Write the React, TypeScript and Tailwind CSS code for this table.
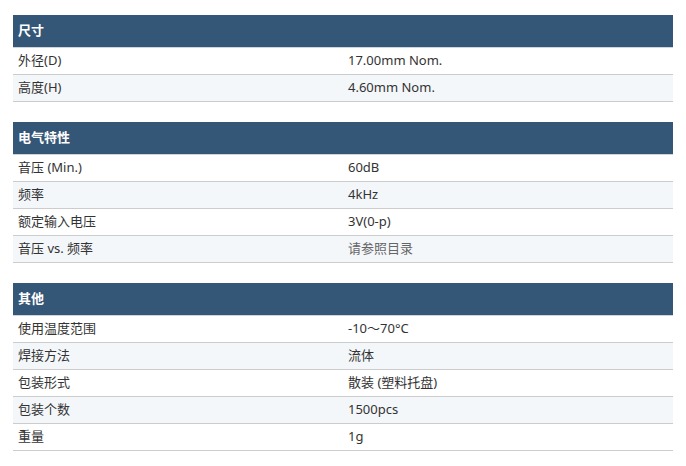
const sections = [
  {
    title: "尺寸",
    rows: [
      ["外径(D)", "17.00mm Nom."],
      ["高度(H)", "4.60mm Nom."],
    ],
  },
  {
    title: "电气特性",
    rows: [
      ["音压 (Min.)", "60dB"],
      ["频率", "4kHz"],
      ["额定输入电压", "3V(0-p)"],
      ["音压 vs. 频率", "请参照目录", "link"],
    ],
  },
  {
    title: "其他",
    rows: [
      ["使用温度范围", "-10～70°C"],
      ["焊接方法", "流体"],
      ["包装形式", "散装 (塑料托盘)"],
      ["包装个数", "1500pcs"],
      ["重量", "1g"],
    ],
  },
];

export default function App() {
  return (
    <div
      className="min-h-[466px] bg-white px-[13px] pt-[15px] text-[13px] text-[#333]"
      style={{ fontFamily: '"Noto Sans", "Noto Sans CJK SC", sans-serif' }}
    >
      {sections.map((s) => (
        <div key={s.title} className="mb-[20px] w-[660px]">
          <div className="flex h-[33px] items-center border-b border-[#cfd4d9] bg-[#345677] px-[5px] font-bold text-white">
            {s.title}
          </div>
          {s.rows.map((r, i) => (
            <div
              key={r[0]}
              className={
                "grid h-[27px] grid-cols-2 items-center border-b border-[#cccccc] " +
                (i % 2 === 1 ? "bg-[#f4f7fa]" : "bg-white")
              }
            >
              <div className="px-[5px]">{r[0]}</div>
              <div className={"px-[5px] " + (r[2] ? "text-[#666]" : "")}>{r[1]}</div>
            </div>
          ))}
        </div>
      ))}
    </div>
  );
}
